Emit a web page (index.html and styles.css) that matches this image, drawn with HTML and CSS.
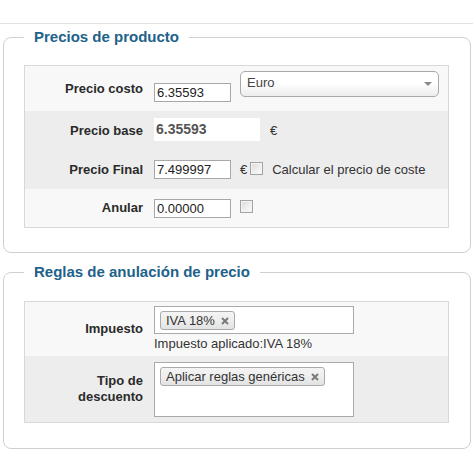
FILE: index.html
```html
<!DOCTYPE html>
<html lang="es">
<head>
<meta charset="utf-8">
<title>Precios de producto</title>
<link rel="stylesheet" href="styles.css">
</head>
<body>
<div class="topbar"></div>

<fieldset class="panel">
  <legend class="panel-title">Precios de producto</legend>
  <div class="form-table">
    <div class="row row-light row-cost">
      <div class="label">Precio costo</div>
      <div class="field field-cost">
        <input class="text-input input-cost" type="text" value="6.35593">
        <div class="select"><span class="select-text">Euro</span><span class="select-arrow"></span></div>
      </div>
    </div>
    <div class="row row-dark row-std">
      <div class="label">Precio base</div>
      <div class="field">
        <span class="readonly-value">6.35593</span>
        <span class="currency currency-base">€</span>
      </div>
    </div>
    <div class="row row-dark row-std">
      <div class="label">Precio Final</div>
      <div class="field">
        <input class="text-input" type="text" value="7.499997">
        <span class="currency">€</span>
        <input class="checkbox checkbox-tight" type="checkbox">
        <span class="check-label">Calcular el precio de coste</span>
      </div>
    </div>
    <div class="row row-light row-last">
      <div class="label">Anular</div>
      <div class="field">
        <input class="text-input" type="text" value="0.00000">
        <input class="checkbox" type="checkbox">
      </div>
    </div>
  </div>
</fieldset>

<fieldset class="panel panel-rules">
  <legend class="panel-title">Reglas de anulación de precio</legend>
  <div class="form-table">
    <div class="row row-light row-tax">
      <div class="label">Impuesto</div>
      <div class="field field-stack">
        <div class="chosen-box chosen-small">
          <span class="tag">IVA 18%<svg class="tag-close" width="8" height="8" viewBox="0 0 8 8"><path d="M1 1L7 7M7 1L1 7" stroke="#7a7a7a" stroke-width="2" fill="none"/></svg></span>
        </div>
        <div class="helper">Impuesto aplicado:IVA 18%</div>
      </div>
    </div>
    <div class="row row-dark row-discount">
      <div class="label">Tipo de<br>descuento</div>
      <div class="field field-stack">
        <div class="chosen-box chosen-large">
          <span class="tag">Aplicar reglas genéricas<svg class="tag-close" width="8" height="8" viewBox="0 0 8 8"><path d="M1 1L7 7M7 1L1 7" stroke="#7a7a7a" stroke-width="2" fill="none"/></svg></span>
        </div>
      </div>
    </div>
  </div>
</fieldset>
</body>
</html>
```
FILE: styles.css
```css
html, body {
  margin: 0;
  padding: 0;
  background: #ffffff;
}

body {
  font-family: "Liberation Sans", Arial, sans-serif;
  font-size: 13px;
  color: #333333;
}

.topbar {
  height: 23px;
  border-bottom: 1px solid #e2e2e2;
}

.panel {
  margin: 4px 2px 0 3px;
  padding: 19px 21px 24px 20px;
  border: 1px solid #d0d0d0;
  border-radius: 8px;
  min-width: 0;
}

.panel-rules {
  margin-top: 10px;
  padding-top: 20px;
  padding-bottom: 25px;
}

.panel-title {
  padding: 0 10px;
  font-size: 15px;
  line-height: 18px;
  font-weight: bold;
  color: #21628a;
}

.form-table {
  border: 1px solid #d8d8d8;
}

.row {
  display: flex;
  align-items: center;
}

.row-light {
  background: #f8f8f8;
}

.row-dark {
  background: #ededed;
}

.row-cost {
  height: 45px;
  align-items: flex-start;
}

.row-cost .label {
  align-self: center;
}

.row-std {
  height: 39px;
}

.row-last {
  height: 38px;
}

.row-tax {
  height: 54px;
  align-items: flex-start;
}

.row-discount {
  height: 66px;
  align-items: flex-start;
}

.row-tax .label,
.row-discount .label {
  align-self: center;
}

.label {
  flex: none;
  width: 129px;
  box-sizing: border-box;
  padding-right: 11px;
  text-align: right;
  font-weight: bold;
  line-height: 16px;
  color: #2a2a2a;
}

.field {
  display: flex;
  align-items: center;
}

.field-cost {
  align-items: flex-start;
}

.text-input {
  width: 77px;
  height: 19px;
  box-sizing: border-box;
  margin: 0;
  padding: 0 2px;
  border: 1px solid #a8a8a8;
  background: #ffffff;
  font-family: "Liberation Sans", Arial, sans-serif;
  font-size: 13px;
  color: #222222;
  outline: none;
}

.input-cost {
  margin-top: 17px;
}

.select {
  margin-top: 5px;
  margin-left: 9px;
  width: 199px;
  height: 26px;
  box-sizing: border-box;
  border: 1px solid #a9a9a9;
  border-radius: 5px;
  background: linear-gradient(#ffffff 0%, #ffffff 45%, #ececec 100%);
  display: flex;
  align-items: center;
  padding: 0 0 0 6px;
  color: #444444;
}

.select-text {
  line-height: 15px;
  margin-bottom: 3px;
}

.select-arrow {
  margin-left: auto;
  margin-right: 6px;
  width: 0;
  height: 0;
  border-top: 4px solid #8a8a8a;
  border-left: 4px solid transparent;
  border-right: 4px solid transparent;
}

.readonly-value {
  width: 106px;
  height: 23px;
  box-sizing: border-box;
  margin-top: -2px;
  padding-left: 2px;
  background: #ffffff;
  font-size: 14px;
  font-weight: bold;
  line-height: 23px;
  color: #555555;
}

.currency {
  margin-left: 9px;
  color: #333333;
}

.currency-base {
  margin-left: 10px;
}

.checkbox {
  -webkit-appearance: none;
  appearance: none;
  width: 13px;
  height: 13px;
  margin: 0 0 3px 9px;
  padding: 0;
  box-sizing: border-box;
  border: 1px solid #a3a3a3;
  background: linear-gradient(135deg, #d9d9d9 0%, #f0f0f0 60%, #fbfbfb 100%);
  box-shadow: inset 0 0 0 1px #f4f4f4;
}

.checkbox-tight {
  margin-left: 3px;
}

.check-label {
  margin-left: 9px;
  color: #333333;
}

.field-stack {
  flex-direction: column;
  align-items: flex-start;
}

.chosen-box {
  width: 200px;
  box-sizing: border-box;
  border: 1px solid #aaaaaa;
  background: #ffffff;
  padding: 4px 5px;
}

.chosen-small {
  margin-top: 4px;
  height: 28px;
}

.chosen-large {
  margin-top: 6px;
  height: 55px;
}

.tag {
  display: inline-flex;
  align-items: center;
  height: 19px;
  box-sizing: border-box;
  padding: 0 5px 0 5px;
  border: 1px solid #aaaaaa;
  border-radius: 3px;
  background: linear-gradient(#f4f4f4 0%, #eeeeee 50%, #e2e2e2 100%);
  color: #333333;
  line-height: 17px;
}

.tag-close {
  margin-left: 6px;
}

.helper {
  margin-top: 2px;
  line-height: 15px;
  color: #333333;
}
```
